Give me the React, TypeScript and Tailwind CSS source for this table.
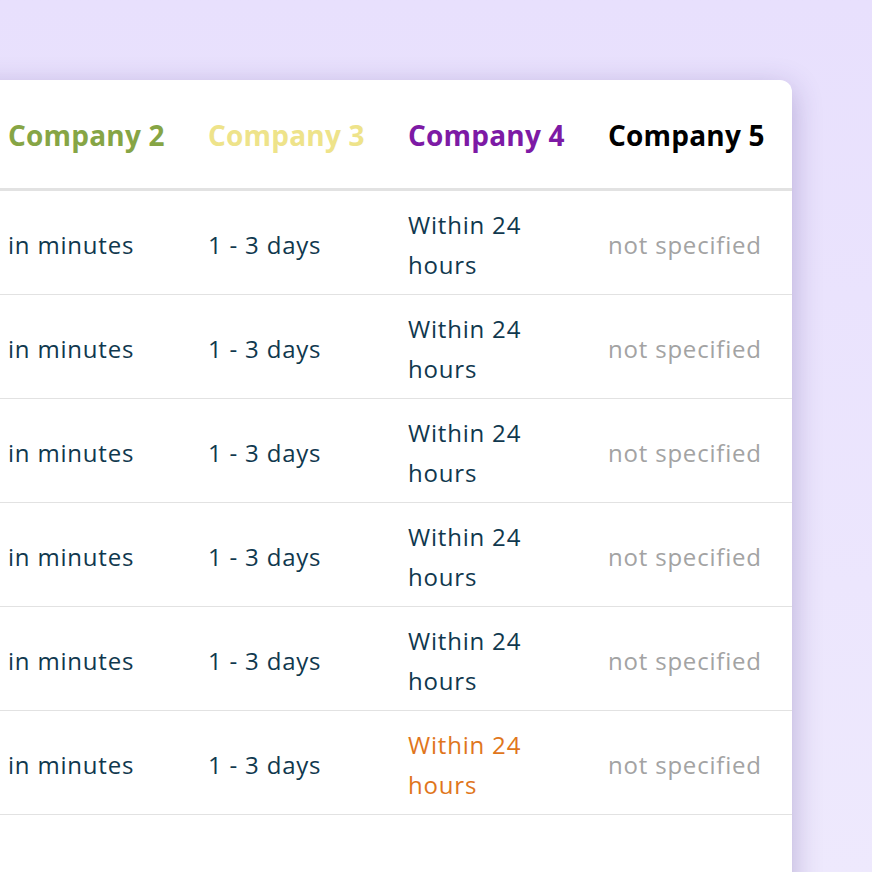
import React from 'react'

type Cell = { text: string; tone?: 'muted' | 'warn' }

const headers = [
  { name: 'Company 2', color: 'text-[#86a545]' },
  { name: 'Company 3', color: 'text-[#eee38a]' },
  { name: 'Company 4', color: 'text-[#7d1aa5]' },
  { name: 'Company 5', color: 'text-black' },
]

const row: Cell[] = [
  { text: 'in minutes' },
  { text: '1 - 3 days' },
  { text: 'Within 24 hours' },
  { text: 'not specified', tone: 'muted' },
]

const rows: Cell[][] = [
  row,
  row,
  row,
  row,
  row,
  [row[0], row[1], { text: 'Within 24 hours', tone: 'warn' }, row[3]],
  [{ text: '' }, { text: '' }, { text: '' }, { text: '' }],
]

const widths = ['w-[200px] pr-10', 'w-[200px] pr-10', 'w-[200px] pr-10', 'w-[192px] pr-0']

function toneClass(tone?: Cell['tone']) {
  if (tone === 'muted') return 'text-[#a3a3a3]'
  if (tone === 'warn') return 'text-[#e0761c]'
  return 'text-[#10384e]'
}

export default function App() {
  return (
    <div
      className="h-[872px] w-[872px] overflow-hidden bg-gradient-to-b from-[#e8e0fd] to-[#eee9fd] pt-[80px]"
      style={{ fontFamily: '"Open Sans", "Noto Sans", sans-serif' }}
    >
      {/* card runs off the left edge; its first column is out of view */}
      <div className="-ml-[200px] w-[992px] rounded-xl bg-white shadow-[0_8px_30px_rgba(70,50,130,0.32)]">
        <div className="flex h-[111px] items-center border-b-[3px] border-[#e2e2e2]">
          <div className="w-[200px]" />
          {headers.map((h, i) => (
            <div key={h.name} className={`${widths[i]} whitespace-nowrap pl-2 pt-[2px] text-[28px] font-bold tracking-[0.2px] ${h.color}`}>
              {h.name}
            </div>
          ))}
        </div>

        {rows.map((cells, r) => (
          <div key={r} className="flex h-[104px] items-center border-b border-[#e2e2e2]">
            <div className="w-[200px]" />
            {cells.map((c, i) => (
              <div
                key={i}
                className={`${widths[i]} pl-2 pt-1 text-[24px] leading-[40px] tracking-[0.8px] ${toneClass(c.tone)}`}
              >
                {c.text}
              </div>
            ))}
          </div>
        ))}
      </div>
    </div>
  )
}
